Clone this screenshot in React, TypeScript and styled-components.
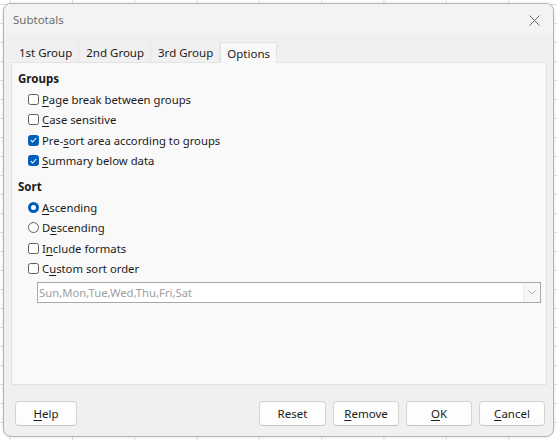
import React from "react";
import styled, { createGlobalStyle } from "styled-components";

const Global = createGlobalStyle`
  html, body { margin: 0; padding: 0; }
  body {
    width: 557px;
    height: 440px;
    overflow: hidden;
    background-color: #ffffff;
    background-image:
      linear-gradient(to right, #dedede 1px, transparent 1px),
      linear-gradient(to bottom, #dedede 1px, transparent 1px);
    background-size: 62.3px 19px, 62.3px 19px;
    background-position: 9.7px 0, 0 4px;
    font-family: "Noto Sans", "Open Sans", sans-serif;
    font-size: 11.3px;
    color: #1b1b1b;
  }
`;

const Stage = styled.div`
  padding: 3px;
  box-sizing: border-box;
  width: 557px;
  height: 440px;
`;

const Dialog = styled.div`
  width: 551px;
  height: 434px;
  box-sizing: border-box;
  border: 1px solid #b4b4b4;
  border-radius: 8px;
  background: #f0f0f0;
  display: flex;
  flex-direction: column;
  overflow: hidden;
  box-shadow: 0 0 3px rgba(0, 0, 0, 0.12);
`;

const TitleBar = styled.div`
  height: 30px;
  flex: none;
  background: #f3f3f3;
  display: flex;
  align-items: center;
  justify-content: space-between;
  padding: 0 9px 0 9px;
`;

const Title = styled.span`
  color: #6e6e6e;
  font-size: 11.5px;
`;

const CloseButton = styled.div`
  width: 14px;
  height: 14px;
  display: flex;
  align-items: center;
  justify-content: center;
  margin-top: 2px;
  margin-right: 3px;
`;

const Body = styled.div`
  flex: 1;
  display: flex;
  flex-direction: column;
  padding: 0 6px 0 7px;
`;

const TabStrip = styled.div`
  height: 28px;
  flex: none;
  display: flex;
  align-items: flex-end;
  padding-left: 1px;
`;

const Tab = styled.div<{ $active?: boolean }>`
  height: ${(p) => (p.$active ? "21px" : "20px")};
  box-sizing: border-box;
  padding: 0 6px;
  display: flex;
  align-items: center;
  font-size: 11.5px;
  color: #1b1b1b;
  background: ${(p) => (p.$active ? "#f9f9f9" : "transparent")};
  border: 1px solid ${(p) => (p.$active ? "#e3e3e3" : "transparent")};
  border-bottom: none;
  border-right-color: ${(p) => (p.$active ? "#e3e3e3" : "#e4e4e4")};
  margin-bottom: ${(p) => (p.$active ? "-1px" : "0")};
  position: relative;
  z-index: ${(p) => (p.$active ? 1 : 0)};
`;

const Panel = styled.div`
  height: 323px;
  box-sizing: border-box;
  background: #f9f9f9;
  border: 1px solid #e3e3e3;
  padding: 6px 0 0 6px;
  display: flex;
  flex-direction: column;
`;

const Heading = styled.div`
  font-weight: 700;
  font-size: 11.5px;
  height: 18px;
  display: flex;
  align-items: center;
  margin-bottom: 2px;
`;

const OptionList = styled.div`
  display: flex;
  flex-direction: column;
  padding-left: 10px;
`;

const OptionRow = styled.label`
  height: 20.5px;
  display: flex;
  align-items: center;
  gap: 3px;
  font-size: 11.3px;
`;

const Box = styled.span<{ $checked?: boolean }>`
  width: 11px;
  height: 11px;
  box-sizing: border-box;
  border-radius: 2.5px;
  border: 1px solid ${(p) => (p.$checked ? "#005fb8" : "#5d5d5d")};
  background: ${(p) => (p.$checked ? "#005fb8" : "#ffffff")};
  display: flex;
  align-items: center;
  justify-content: center;
  flex: none;
`;

const Radio = styled.span<{ $checked?: boolean }>`
  width: 11px;
  height: 11px;
  box-sizing: border-box;
  border-radius: 50%;
  border: ${(p) => (p.$checked ? "3px solid #005fb8" : "1px solid #5d5d5d")};
  background: #ffffff;
  flex: none;
`;

const Key = styled.span`
  text-decoration: underline;
  text-underline-offset: 2px;
  text-decoration-thickness: 1px;
`;

const SectionGap = styled.div`
  height: 6px;
`;

const Combo = styled.div`
  margin: 3px 5px 0 19px;
  height: 21px;
  box-sizing: border-box;
  border: 1px solid #a9a9a9;
  background: #ffffff;
  display: flex;
  align-items: stretch;
`;

const ComboText = styled.div`
  flex: 1;
  display: flex;
  align-items: center;
  padding-left: 1px;
  color: #a0a0a0;
  font-size: 11.3px;
`;

const ComboButton = styled.div`
  width: 16px;
  background: #f7f7f7;
  border-left: 1px solid #eeeeee;
  display: flex;
  align-items: center;
  justify-content: center;
`;

const ButtonRow = styled.div`
  flex: 1;
  display: flex;
  align-items: flex-start;
  padding: 16px 2px 0 4px;
  gap: 7px;
`;

const Spacer = styled.div`
  flex: 1;
`;

const Button = styled.div<{ $w: number }>`
  width: ${(p) => p.$w}px;
  height: 25px;
  box-sizing: border-box;
  border: 1px solid #d4d4d4;
  border-bottom-color: #c4c4c4;
  border-radius: 4px;
  background: #fdfdfd;
  display: flex;
  align-items: center;
  justify-content: center;
  font-size: 11.5px;
  color: #1b1b1b;
`;

const Check = () => (
  <svg width="7" height="6" viewBox="0 0 7 6">
    <path d="M0.8 3.2 L2.6 5 L6.2 1" fill="none" stroke="#fff" strokeWidth="1.1" />
  </svg>
);

export default function App() {
  return (
    <>
      <Global />
      <Stage>
        <Dialog>
          <TitleBar>
            <Title>Subtotals</Title>
            <CloseButton>
              <svg width="11" height="11" viewBox="0 0 11 11">
                <path d="M0.5 0.5 L10.5 10.5 M10.5 0.5 L0.5 10.5" stroke="#6a6a6a" strokeWidth="1" />
              </svg>
            </CloseButton>
          </TitleBar>
          <Body>
            <TabStrip>
              <Tab>1st Group</Tab>
              <Tab>2nd Group</Tab>
              <Tab>3rd Group</Tab>
              <Tab $active>Options</Tab>
            </TabStrip>
            <Panel>
              <Heading>Groups</Heading>
              <OptionList>
                <OptionRow>
                  <Box />
                  <span><Key>P</Key>age break between groups</span>
                </OptionRow>
                <OptionRow>
                  <Box />
                  <span><Key>C</Key>ase sensitive</span>
                </OptionRow>
                <OptionRow>
                  <Box $checked><Check /></Box>
                  <span>Pre-<Key>s</Key>ort area according to groups</span>
                </OptionRow>
                <OptionRow>
                  <Box $checked><Check /></Box>
                  <span><Key>S</Key>ummary below data</span>
                </OptionRow>
              </OptionList>
              <SectionGap />
              <Heading>Sort</Heading>
              <OptionList>
                <OptionRow>
                  <Radio $checked />
                  <span><Key>A</Key>scending</span>
                </OptionRow>
                <OptionRow>
                  <Radio />
                  <span>D<Key>e</Key>scending</span>
                </OptionRow>
                <OptionRow>
                  <Box />
                  <span>I<Key>n</Key>clude formats</span>
                </OptionRow>
                <OptionRow>
                  <Box />
                  <span>C<Key>u</Key>stom sort order</span>
                </OptionRow>
              </OptionList>
              <Combo>
                <ComboText>Sun,Mon,Tue,Wed,Thu,Fri,Sat</ComboText>
                <ComboButton>
                  <svg width="8" height="5" viewBox="0 0 8 5">
                    <path d="M0.5 0.5 L4 4 L7.5 0.5" fill="none" stroke="#b0b0b0" strokeWidth="1" />
                  </svg>
                </ComboButton>
              </Combo>
            </Panel>
            <ButtonRow>
              <Button $w={62}><span><Key>H</Key>elp</span></Button>
              <Spacer />
              <Button $w={67}>Reset</Button>
              <Button $w={66}><span><Key>R</Key>emove</span></Button>
              <Button $w={66}><span><Key>O</Key>K</span></Button>
              <Button $w={66}><span><Key>C</Key>ancel</span></Button>
            </ButtonRow>
          </Body>
        </Dialog>
      </Stage>
    </>
  );
}
